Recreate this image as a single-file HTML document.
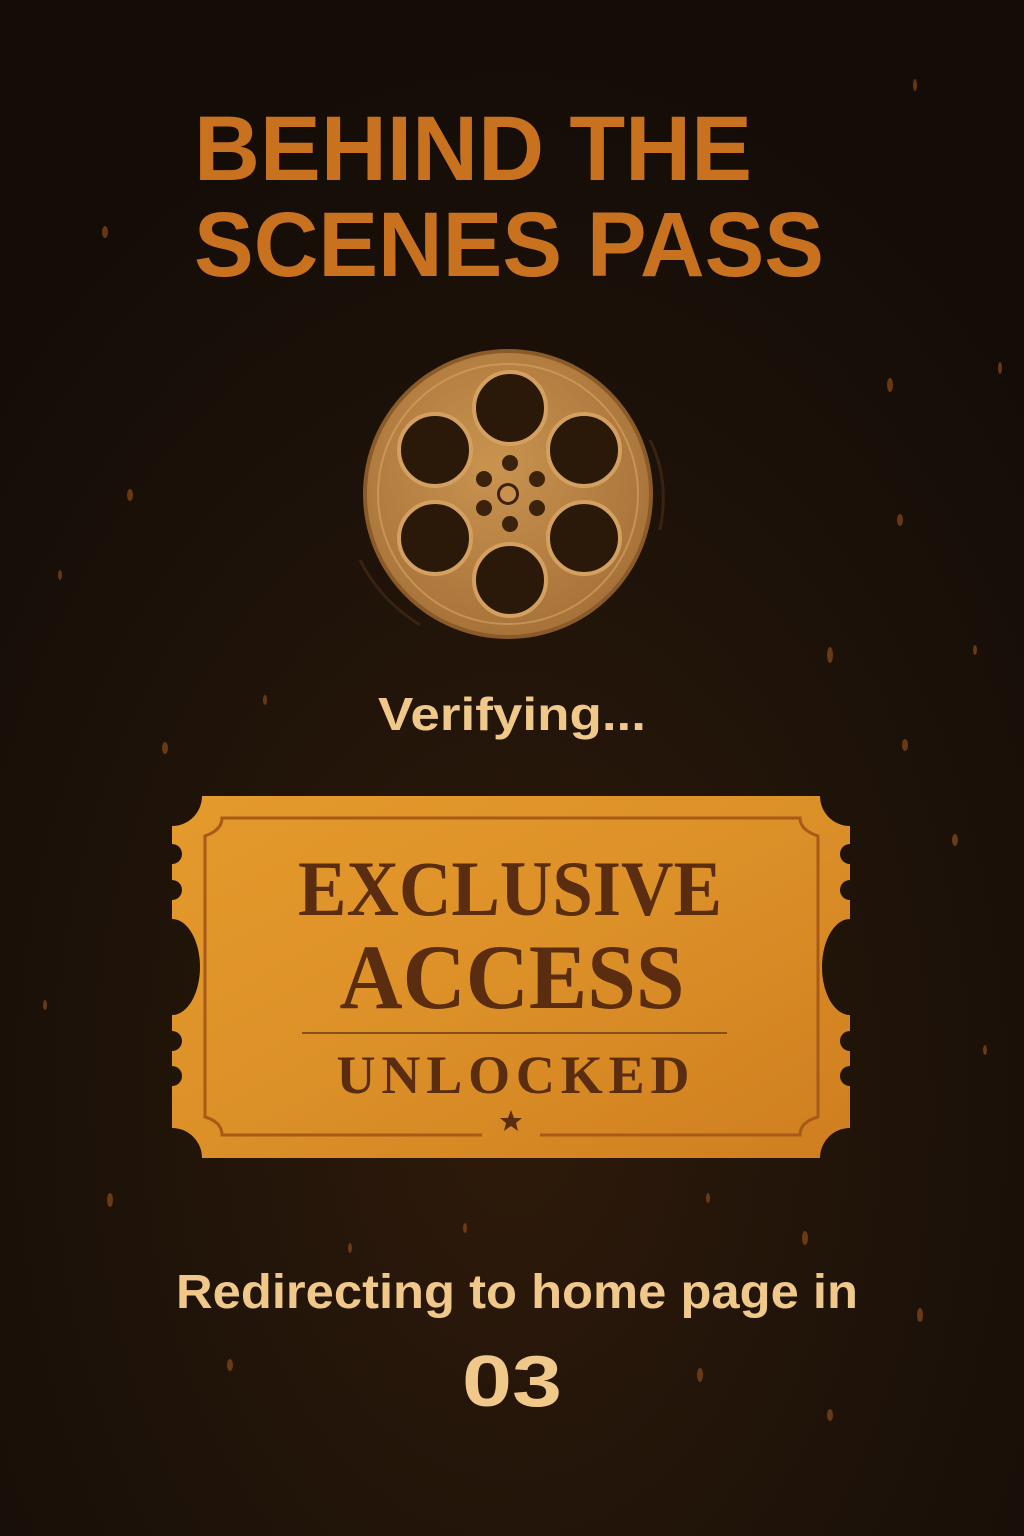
<!DOCTYPE html>
<html><head><meta charset="utf-8"><style>
html,body{margin:0;padding:0;width:1024px;height:1536px;overflow:hidden;background:#1a1008}
svg{display:block}
</style></head><body>
<svg width="1024" height="1536" viewBox="0 0 1024 1536" xmlns="http://www.w3.org/2000/svg">
<defs>
<radialGradient id="bg" cx="50%" cy="72%" r="70%">
<stop offset="0" stop-color="#2e1a0a"/><stop offset="0.6" stop-color="#1d1209"/><stop offset="1" stop-color="#140c07"/>
</radialGradient>
<linearGradient id="tk" x1="0" y1="0" x2="1" y2="1">
<stop offset="0" stop-color="#e59a2c"/><stop offset="0.5" stop-color="#dc9028"/><stop offset="1" stop-color="#cf7e1f"/>
</linearGradient>
<radialGradient id="reel" cx="45%" cy="40%" r="60%">
<stop offset="0" stop-color="#c9934f"/><stop offset="1" stop-color="#a8733a"/>
</radialGradient>
<mask id="tm">
<rect x="0" y="0" width="1024" height="1536" fill="#fff"/>
<circle cx="172" cy="796" r="30" fill="#000"/><circle cx="850" cy="796" r="30" fill="#000"/>
<circle cx="172" cy="1158" r="30" fill="#000"/><circle cx="850" cy="1158" r="30" fill="#000"/>
<circle cx="172" cy="854" r="10" fill="#000"/><circle cx="172" cy="890" r="10" fill="#000"/>
<circle cx="172" cy="1041" r="10" fill="#000"/><circle cx="172" cy="1076" r="10" fill="#000"/>
<circle cx="850" cy="854" r="10" fill="#000"/><circle cx="850" cy="890" r="10" fill="#000"/>
<circle cx="850" cy="1041" r="10" fill="#000"/><circle cx="850" cy="1076" r="10" fill="#000"/>
<ellipse cx="172" cy="967" rx="28" ry="48" fill="#000"/><ellipse cx="850" cy="967" rx="28" ry="48" fill="#000"/>
</mask>
</defs>
<rect width="1024" height="1536" fill="url(#bg)"/>
<g fill="#8a4a18" opacity="0.7">
<ellipse cx="105" cy="232" rx="3" ry="6"/><ellipse cx="890" cy="385" rx="3" ry="7"/><ellipse cx="130" cy="495" rx="3" ry="6"/>
<ellipse cx="900" cy="520" rx="3" ry="6"/><ellipse cx="830" cy="655" rx="3" ry="8"/><ellipse cx="165" cy="748" rx="3" ry="6"/>
<ellipse cx="905" cy="745" rx="3" ry="6"/><ellipse cx="955" cy="840" rx="3" ry="6"/><ellipse cx="60" cy="575" rx="2" ry="5"/>
<ellipse cx="110" cy="1200" rx="3" ry="7"/><ellipse cx="805" cy="1238" rx="3" ry="7"/><ellipse cx="920" cy="1315" rx="3" ry="7"/>
<ellipse cx="230" cy="1365" rx="3" ry="6"/><ellipse cx="700" cy="1375" rx="3" ry="7"/><ellipse cx="830" cy="1415" rx="3" ry="6"/>
<ellipse cx="465" cy="1228" rx="2" ry="5"/><ellipse cx="350" cy="1248" rx="2" ry="5"/><ellipse cx="265" cy="700" rx="2" ry="5"/>
<ellipse cx="915" cy="85" rx="2" ry="6"/><ellipse cx="1000" cy="368" rx="2" ry="6"/><ellipse cx="708" cy="1198" rx="2" ry="5"/>
<ellipse cx="45" cy="1005" rx="2" ry="5"/><ellipse cx="985" cy="1050" rx="2" ry="5"/><ellipse cx="975" cy="650" rx="2" ry="5"/>
</g>
<g font-family="'Liberation Sans',sans-serif" font-weight="bold" fill="#c8721f">
<text x="194" y="180" font-size="92" textLength="558" lengthAdjust="spacingAndGlyphs">BEHIND THE</text>
<text x="194" y="276" font-size="92" textLength="630" lengthAdjust="spacingAndGlyphs">SCENES PASS</text>
</g>
<g>
<path d="M360 560 Q380 600 420 625" stroke="#3a2210" stroke-width="3" fill="none"/>
<path d="M650 440 Q670 480 660 530" stroke="#3a2210" stroke-width="3" fill="none"/>
<circle cx="508" cy="494" r="145" fill="#8a5a28"/>
<circle cx="508" cy="494" r="141" fill="url(#reel)"/>
<circle cx="508" cy="494" r="130" fill="none" stroke="#d9a565" stroke-width="2" opacity="0.6"/>
<g fill="#2a1808" stroke="#d4a060" stroke-width="4">
<circle cx="510" cy="408" r="36"/><circle cx="584" cy="450" r="36"/><circle cx="584" cy="538" r="36"/>
<circle cx="510" cy="580" r="36"/><circle cx="435" cy="538" r="36"/><circle cx="435" cy="450" r="36"/>
</g>
<g fill="#3a220c">
<circle cx="510" cy="463" r="8"/><circle cx="537" cy="479" r="8"/><circle cx="537" cy="508" r="8"/>
<circle cx="510" cy="524" r="8"/><circle cx="484" cy="508" r="8"/><circle cx="484" cy="479" r="8"/>
<circle cx="508" cy="494" r="11"/>
</g>
<circle cx="508" cy="494" r="8" fill="#c99050"/>
</g>
<text x="512" y="730" text-anchor="middle" font-family="'Liberation Sans',sans-serif" font-weight="bold" font-size="46" fill="#f0c88a" textLength="268" lengthAdjust="spacingAndGlyphs">Verifying...</text>
<rect x="172" y="796" width="678" height="362" fill="url(#tk)" mask="url(#tm)"/>
<path d="M482 1135 H222 Q222 1122 205 1117 V836 Q222 830 222 818 H800 Q800 830 818 836 V1117 Q800 1122 800 1135 H540" fill="none" stroke="#a85a18" stroke-width="3"/>
<g font-family="'Liberation Serif',serif" font-weight="bold" fill="#5a2c10" text-anchor="middle">
<text x="510" y="915" font-size="78" textLength="424" lengthAdjust="spacingAndGlyphs">EXCLUSIVE</text>
<text x="512" y="1008" font-size="92" textLength="345" lengthAdjust="spacingAndGlyphs">ACCESS</text>
<text x="513" y="1093" font-size="54" textLength="353" lengthAdjust="spacing">UNLOCKED</text>
</g>
<line x1="302" y1="1033" x2="727" y2="1033" stroke="#6a3a14" stroke-width="1.5"/>
<polygon points="511,1110 514,1118 522,1118 516,1123 518,1131 511,1126 504,1131 506,1123 500,1118 508,1118" fill="#5a2c10"/>
<g font-family="'Liberation Sans',sans-serif" font-weight="bold" fill="#f0c88a" text-anchor="middle">
<text x="517" y="1308" font-size="48" textLength="682" lengthAdjust="spacingAndGlyphs">Redirecting to home page in</text>
<text x="512" y="1406" font-size="72" textLength="100" lengthAdjust="spacingAndGlyphs">03</text>
</g>
</svg>
</body></html>
